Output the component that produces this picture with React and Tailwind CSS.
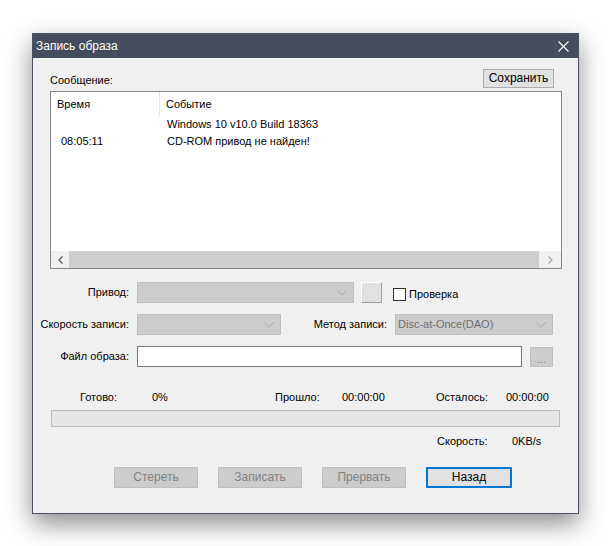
import React from 'react';

const Chevron = () => (
    <svg width="10" height="6" viewBox="0 0 10 6" className="text-[#a6a6a6]">
        <polyline points="0.5,0.5 5,5 9.5,0.5" fill="none" stroke="currentColor" strokeWidth="1" />
    </svg>
);

const Combo = ({ width, text }) => (
    <div className={`${width} h-[21px] bg-[#cccccc] border border-[#bfbfbf] flex items-center justify-between pl-[2px] pr-[6px]`}>
        <span className="text-[#6d6d6d]">{text}</span>
        <Chevron />
    </div>
);

const DisabledButton = ({ children }) => (
    <div className="w-[84px] h-[21px] bg-[#cccccc] border border-[#bfbfbf] flex items-center justify-center text-[#838383] text-[12px]">
        {children}
    </div>
);

const App = () => {
    return (
        <div className="w-[611px] h-[546px] bg-white pt-[33px] pl-[32px] font-['Liberation_Sans',Arial,sans-serif] text-[11px] text-black leading-[13px]">
            <div className="w-[547px] h-[481px] border border-[#4a5262] bg-[#f0f0f0] flex flex-col shadow-[0_10px_24px_rgba(0,0,0,0.45)]">
                {/* title bar */}
                <div className="h-[24px] bg-[#454d5c] flex items-center justify-between pl-[3px] pr-[9px] text-white text-[12px]">
                    <span>Запись образа</span>
                    <svg width="11" height="11" viewBox="0 0 11 11">
                        <line x1="0.5" y1="0.5" x2="10.5" y2="10.5" stroke="#ffffff" strokeWidth="1.1" />
                        <line x1="10.5" y1="0.5" x2="0.5" y2="10.5" stroke="#ffffff" strokeWidth="1.1" />
                    </svg>
                </div>

                {/* message area */}
                <div className="pl-[17px] pr-[16px]">
                    <div className="mt-[11px] h-[19px] flex items-center justify-between">
                        <span className="mt-[3px]">Сообщение:</span>
                        <div className="mr-[8px] w-[71px] h-[19px] bg-[#e1e1e1] border border-[#adadad] flex items-center justify-center text-[12px]">
                            Сохранить
                        </div>
                    </div>
                    <div className="mt-[3px] h-[178px] border border-[#828790] bg-white flex flex-col">
                        <div className="h-[24px] flex">
                            <div className="w-[109px] border-r border-[#e5e5e5] pl-[6px] flex items-center">Время</div>
                            <div className="pl-[6px] flex items-center">Событие</div>
                        </div>
                        <div className="h-[17px] flex items-center">
                            <div className="w-[110px]"></div>
                            <div className="pl-[6px]">Windows 10 v10.0 Build 18363</div>
                        </div>
                        <div className="h-[17px] flex items-center">
                            <div className="w-[110px] pl-[10px]">08:05:11</div>
                            <div className="pl-[6px]">CD-ROM привод не найден!</div>
                        </div>
                        <div className="flex-1"></div>
                        <div className="h-[17px] bg-[#f0f0f0] flex items-center">
                            <div className="w-[18px] flex items-center justify-center">
                                <svg width="5" height="8" viewBox="0 0 5 8">
                                    <polyline points="4.5,0.5 1,4 4.5,7.5" fill="none" stroke="#606060" strokeWidth="1.4" />
                                </svg>
                            </div>
                            <div className="flex-1 h-[17px] bg-[#cdcdcd]"></div>
                            <div className="w-[22px] flex items-center justify-center">
                                <svg width="5" height="8" viewBox="0 0 5 8">
                                    <polyline points="0.5,0.5 4,4 0.5,7.5" fill="none" stroke="#a0a0a0" strokeWidth="1.2" />
                                </svg>
                            </div>
                        </div>
                    </div>
                </div>

                {/* form rows */}
                <div className="mt-[13px] flex items-center h-[21px]">
                    <span className="w-[96px] text-right">Привод:</span>
                    <div className="ml-[8px]">
                        <Combo width="w-[217px]" text="" />
                    </div>
                    <div className="ml-[7px] w-[21px] h-[21px] bg-[#e1e1e1] border border-t-white border-l-white border-r-[#a0a0a0] border-b-[#a0a0a0]"></div>
                    <div className="ml-[11px] mt-[4px] w-[13px] h-[13px] bg-white border border-[#333333]"></div>
                    <span className="ml-[3px] mt-[4px]">Проверка</span>
                </div>
                <div className="mt-[11px] flex items-center h-[21px]">
                    <span className="w-[96px] text-right whitespace-nowrap">Скорость записи:</span>
                    <div className="ml-[8px]">
                        <Combo width="w-[144px]" text="" />
                    </div>
                    <span className="w-[106px] text-right">Метод записи:</span>
                    <div className="ml-[8px]">
                        <Combo width="w-[158px]" text="Disc-at-Once(DAO)" />
                    </div>
                </div>
                <div className="mt-[11px] flex items-center h-[21px]">
                    <span className="w-[96px] text-right">Файл образа:</span>
                    <div className="ml-[8px] w-[385px] h-[21px] bg-white border border-[#7a7a7a]"></div>
                    <div className="ml-[8px] w-[23px] h-[20px] bg-[#cccccc] border border-[#bfbfbf] flex items-end justify-center pb-[3px] text-[#8a8a8a] leading-[8px]">
                        ...
                    </div>
                </div>

                {/* progress */}
                <div className="mt-[24px] h-[13px] flex pl-[47px]">
                    <span className="w-[72px]">Готово:</span>
                    <span className="w-[123px]">0%</span>
                    <span className="w-[67px]">Прошло:</span>
                    <span className="w-[94px]">00:00:00</span>
                    <span className="w-[70px]">Осталось:</span>
                    <span>00:00:00</span>
                </div>
                <div className="mt-[6px] ml-[18px] w-[509px] h-[17px] bg-[#e6e6e6] border border-[#bcbcbc]"></div>
                <div className="mt-[8px] h-[13px] flex pl-[404px]">
                    <span className="w-[75px]">Скорость:</span>
                    <span>0KB/s</span>
                </div>

                {/* buttons */}
                <div className="mt-[19px] flex gap-[20px] pl-[81px]">
                    <DisabledButton>Стереть</DisabledButton>
                    <DisabledButton>Записать</DisabledButton>
                    <DisabledButton>Прервать</DisabledButton>
                    <div className="w-[86px] h-[21px] bg-[#e1e1e1] border-2 border-[#0078d7] flex items-center justify-center text-[12px]">
                        Назад
                    </div>
                </div>
            </div>
        </div>
    );
};

export default App;
